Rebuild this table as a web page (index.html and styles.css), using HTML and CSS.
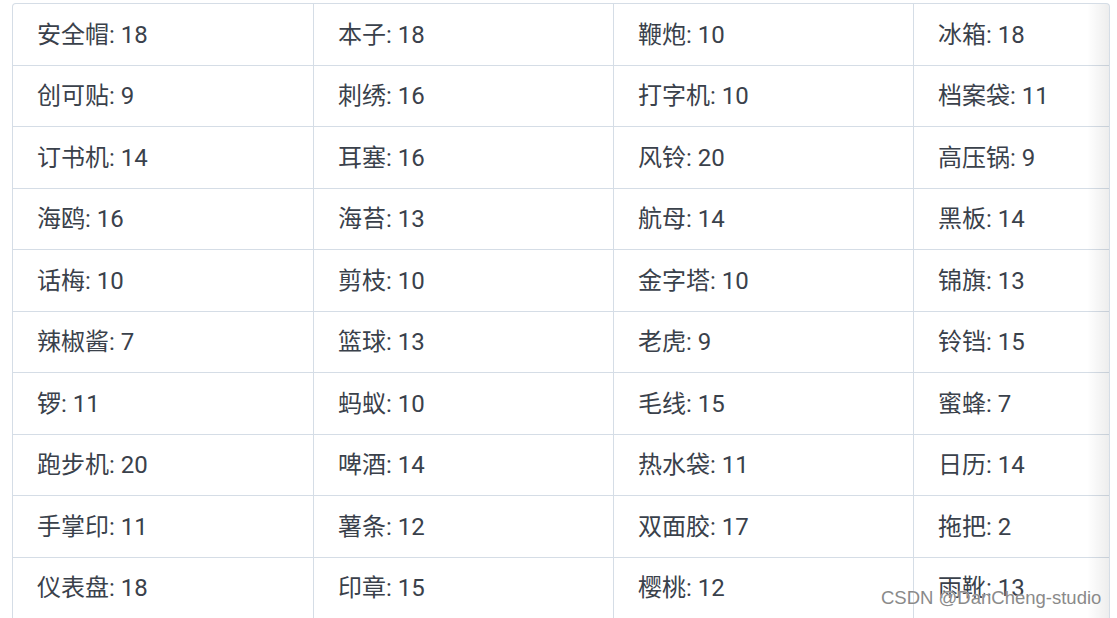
FILE: index.html
```html
<!DOCTYPE html>
<html lang="zh">
<head>
<meta charset="utf-8">
<link rel="stylesheet" href="styles.css">
</head>
<body>
<div class="wrap">
  <div class="grid">
    <div class="cell">安全帽: 18</div><div class="cell">本子: 18</div><div class="cell">鞭炮: 10</div><div class="cell">冰箱: 18</div>
    <div class="cell">创可贴: 9</div><div class="cell">刺绣: 16</div><div class="cell">打字机: 10</div><div class="cell">档案袋: 11</div>
    <div class="cell">订书机: 14</div><div class="cell">耳塞: 16</div><div class="cell">风铃: 20</div><div class="cell">高压锅: 9</div>
    <div class="cell">海鸥: 16</div><div class="cell">海苔: 13</div><div class="cell">航母: 14</div><div class="cell">黑板: 14</div>
    <div class="cell">话梅: 10</div><div class="cell">剪枝: 10</div><div class="cell">金字塔: 10</div><div class="cell">锦旗: 13</div>
    <div class="cell">辣椒酱: 7</div><div class="cell">篮球: 13</div><div class="cell">老虎: 9</div><div class="cell">铃铛: 15</div>
    <div class="cell">锣: 11</div><div class="cell">蚂蚁: 10</div><div class="cell">毛线: 15</div><div class="cell">蜜蜂: 7</div>
    <div class="cell">跑步机: 20</div><div class="cell">啤酒: 14</div><div class="cell">热水袋: 11</div><div class="cell">日历: 14</div>
    <div class="cell">手掌印: 11</div><div class="cell">薯条: 12</div><div class="cell">双面胶: 17</div><div class="cell">拖把: 2</div>
    <div class="cell">仪表盘: 18</div><div class="cell">印章: 15</div><div class="cell">樱桃: 12</div><div class="cell">雨靴: 13</div>
  </div>
  <div class="shade"></div>
</div>
<div class="watermark">CSDN @DanCheng-studio</div>
</body>
</html>
```

FILE: styles.css
```css
html, body {
  margin: 0;
  padding: 0;
  background: #ffffff;
  overflow: hidden;
  height: 618px;
}
body {
  font-family: Roboto, "Noto Sans CJK SC", sans-serif;
  color: #3a414b;
  position: relative;
}
.wrap {
  position: relative;
  margin: 3px 0 0 12px;
  width: 1098px;
  height: 615px;
  border: 1px solid #d5dde6;
  border-bottom: none;
  border-radius: 4px 4px 0 0;
  box-sizing: border-box;
  overflow: hidden;
}
.grid {
  display: grid;
  grid-template-columns: 301px 300px 300px 300px;
  grid-auto-rows: 61.5px;
  width: 1201px;
}
.cell {
  box-sizing: border-box;
  border-right: 1px solid #d5dde6;
  border-bottom: 1px solid #d5dde6;
  padding-left: 24px;
  padding-bottom: 4px;
  display: flex;
  align-items: center;
  font-size: 24px;
  white-space: nowrap;
}
.shade {
  position: absolute;
  top: 0;
  right: 0;
  width: 22px;
  height: 100%;
  background: linear-gradient(to right, rgba(0,0,0,0), rgba(0,0,0,0.07));
}
.watermark {
  position: absolute;
  left: 881px;
  top: 587px;
  font-family: "Liberation Sans", sans-serif;
  font-size: 18.5px;
  color: #8a8a8a;
  text-shadow: 0 0 1px #fff;
  white-space: nowrap;
}
```
